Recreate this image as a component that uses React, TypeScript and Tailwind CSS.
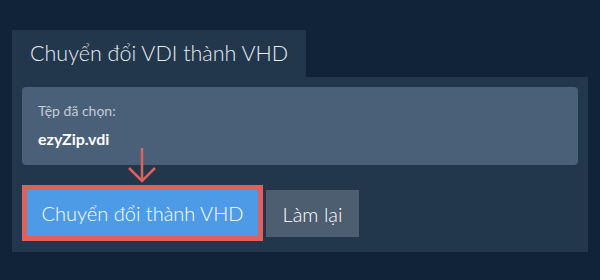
export default function App() {
  return (
    <div
      className="w-[600px] h-[280px] bg-[#112339] pt-[30px] px-[12px]"
      style={{ fontFamily: 'Lato, "Noto Sans", sans-serif' }}
    >
      <div className="flex">
        <div className="w-[294px] h-[47px] bg-[#22364c] pl-[18px] flex items-center text-[21.5px] text-[#e8ecf0] font-light">
          Chuyển đổi VDI thành VHD
        </div>
      </div>
      <div className="w-[576px] h-[175px] bg-[#22364c] px-[10px] pt-[10px]">
        <div className="h-[78px] rounded-[4px] bg-[#4a6078] px-[16px] pt-[15px]">
          <div className="text-[14px] leading-[18px] text-[#c3ccd6]">Tệp đã chọn:</div>
          <div className="mt-[9px] text-[16px] leading-[20px] font-bold text-white">ezyZip.vdi</div>
        </div>
        <div className="relative flex items-start gap-[3px] mt-[20px] h-[57px]">
          <svg
            className="absolute left-[106px] top-[-37px]"
            width="28"
            height="35"
            viewBox="0 0 28 35"
            fill="none"
            stroke="#e0605a"
            strokeWidth="2.5"
          >
            <line x1="14" y1="0" x2="14" y2="33" />
            <polyline points="1,20 14,33 27,20" />
          </svg>
          <div className="border-[5px] border-[#e0605a]">
            <button className="w-[231px] h-[46px] bg-[#4d9be6] text-white text-[20px] font-light flex items-center justify-center">
              Chuyển đổi thành VHD
            </button>
          </div>
          <button className="mt-[5px] w-[93px] h-[47px] bg-[#4d5e70] text-white text-[20px] font-light flex items-center justify-center">
            Làm lại
          </button>
        </div>
      </div>
    </div>
  );
}
